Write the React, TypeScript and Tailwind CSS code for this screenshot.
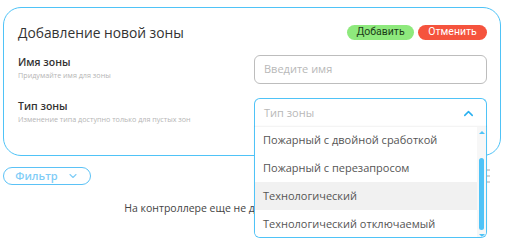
import { ChevronDown, ChevronUp } from 'lucide-react';

const zoneTypes = [
  'Пожарный с двойной сработкой',
  'Пожарный с перезапросом',
  'Технологический',
  'Технологический отключаемый',
];

function ZoneTypeSelect() {
  return (
    <div className="relative w-[233px]">
      <div className="h-[29px] flex items-center justify-between pl-[9px] pr-[10px] border-t border-x border-[#4fc3f7] rounded-t-[6px] bg-white">
        <span className="text-[11px] text-[#b8b8b8]">Тип зоны</span>
        <ChevronUp size={15} strokeWidth={2.4} className="text-[#29b0f0]" />
      </div>
      <div className="absolute z-10 left-0 right-0 top-full h-[111px] bg-white border-x border-b border-[#4fc3f7] rounded-b-[6px] overflow-hidden shadow-[0_-1px_2px_rgba(0,0,0,0.06)]">
        <div className="mr-[9px] -mt-[1px]">
          {zoneTypes.map((t) => (
            <div
              key={t}
              className={
                'h-[28px] flex items-center pl-[8px] text-[11px] text-[#555] ' +
                (t === 'Технологический' ? 'bg-[#f1f1f1]' : 'bg-white')
              }
            >
              {t}
            </div>
          ))}
        </div>
        {/* scrollbar */}
        <div className="absolute top-0 bottom-0 right-0 w-[9px] bg-[#f7f7f7] flex flex-col items-center">
          <div className="mt-[4px] w-0 h-0 border-x-[3px] border-x-transparent border-b-[3px] border-b-[#4fc3f7]" />
          <div className="mt-[24px] w-[5px] h-[72px] rounded-full bg-[#4fc3f7]" />
          <div className="mt-[4px] w-0 h-0 border-x-[3px] border-x-transparent border-t-[3px] border-t-[#4fc3f7]" />
        </div>
      </div>
    </div>
  );
}

export default function App() {
  return (
    <div
      className="relative w-[508px] h-[246px] bg-white overflow-hidden"
      style={{ fontFamily: '"Open Sans", "Noto Sans", sans-serif' }}
    >
      <div className="ml-[3px] mt-[7px] w-[498px] h-[149px] border border-[#4fc3f7] rounded-[18px] pl-[14px] pr-[13px] pt-[17px]">
        <div className="flex items-center justify-between h-[15px]">
          <h1 className="text-[13.8px] leading-none text-[#333]">Добавление новой зоны</h1>
          <div className="flex gap-[4px]" style={{ fontFamily: 'Roboto, sans-serif' }}>
            <button className="w-[67px] h-[15px] rounded-full bg-[#8ee97d] text-[10.5px] leading-none text-[#1d3d18]">
              Добавить
            </button>
            <button className="w-[69px] h-[15px] rounded-full bg-[#f5533d] text-[10.5px] leading-none text-white">
              Отменить
            </button>
          </div>
        </div>

        <div className="mt-[15px] flex justify-between">
          <div>
            <div className="text-[10.5px] leading-[14px] font-semibold text-[#333]">Имя зоны</div>
            <div className="text-[7.2px] leading-[12px] text-[#b5b5b5]">Придумайте имя для зоны</div>
          </div>
          <div className="w-[233px] h-[29px] flex items-center pl-[9px] border border-[#bdbdbd] rounded-[6px]">
            <span className="text-[11px] text-[#b8b8b8]">Введите имя</span>
          </div>
        </div>

        <div className="mt-[14px] flex justify-between">
          <div className="pt-[1px]">
            <div className="text-[10.5px] leading-[14px] font-semibold text-[#333]">Тип зоны</div>
            <div className="text-[7.2px] leading-[12px] text-[#b5b5b5]">
              Изменение типа доступно только для пустых зон
            </div>
          </div>
          <ZoneTypeSelect />
        </div>
      </div>

      <div className="mt-[11px] flex items-center justify-between pl-[3px] pr-[18px]">
        <button className="w-[88px] h-[18px] flex items-center justify-center gap-[9px] border border-[#5bc2f6] rounded-full text-[11px] font-semibold text-[#7fcdf7]">
          <span>Фильтр</span>
          <ChevronDown size={12} strokeWidth={2.2} className="text-[#7fcdf7]" />
        </button>
        <div className="flex flex-col gap-[4px] w-[16px]">
          <div className="h-[2px] bg-[#d4d4d4]" />
          <div className="h-[2px] bg-[#d4d4d4]" />
          <div className="h-[2px] bg-[#d4d4d4]" />
        </div>
      </div>

      <p className="mt-[16px] text-center text-[10.5px] text-[#444]">
        На контроллере еще не добавлено ни одной зоны
      </p>
    </div>
  );
}
